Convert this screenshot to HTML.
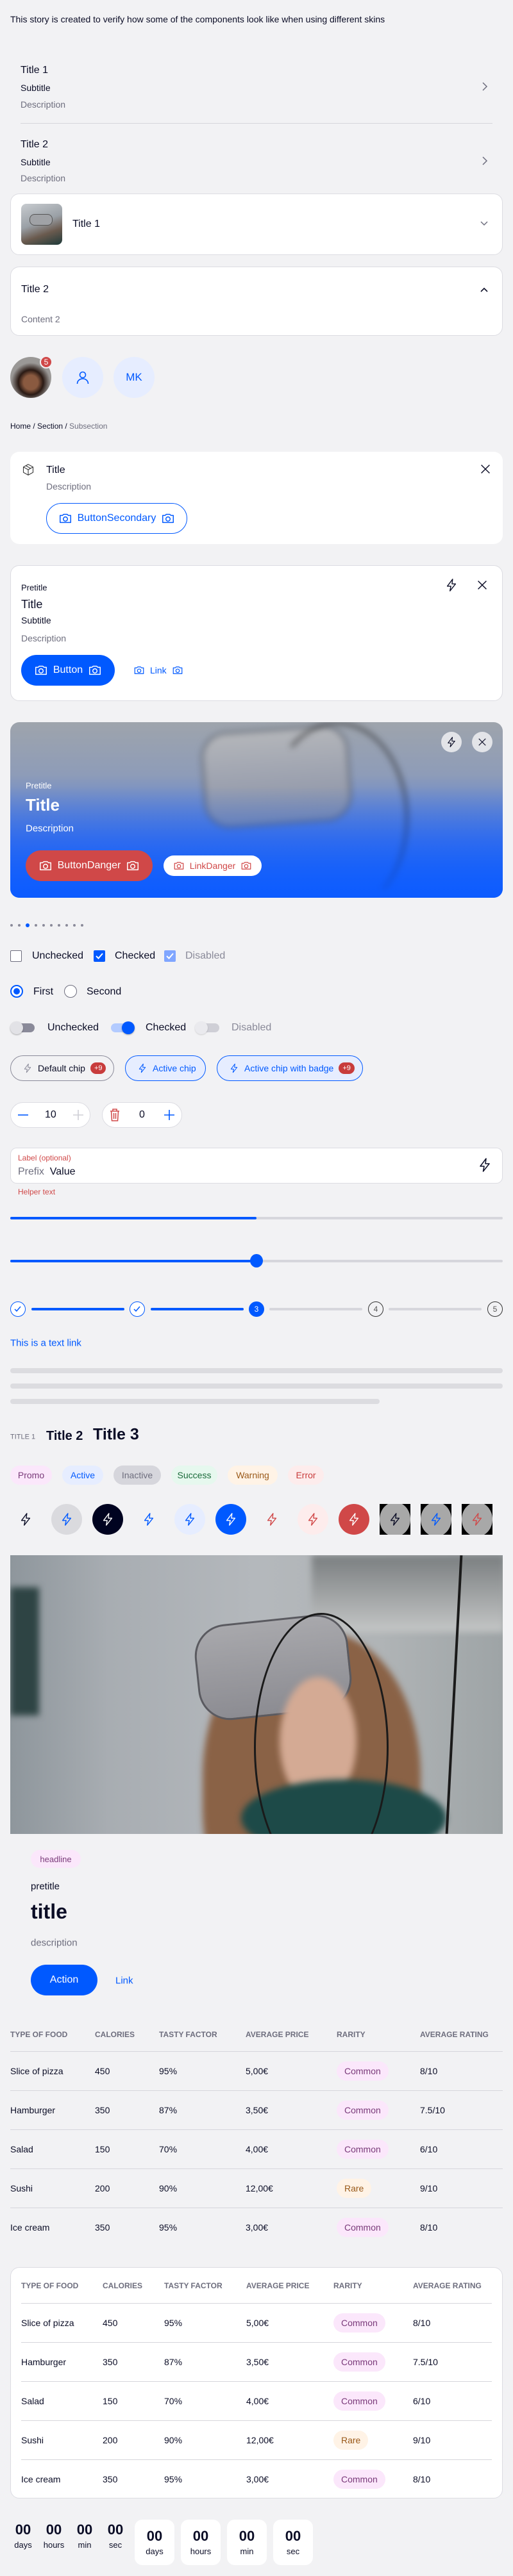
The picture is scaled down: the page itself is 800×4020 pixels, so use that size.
<!DOCTYPE html>
<html><head><meta charset="utf-8">
<style>
*{box-sizing:border-box;margin:0;padding:0}
body{width:800px;height:4020px;background:#f2f2f4;font-family:"Liberation Sans",sans-serif;color:#0b0d26;position:relative;overflow:hidden}
.a{position:absolute}
.t{position:absolute;white-space:nowrap;line-height:1;transform:translateY(-50%)}
.card{position:absolute;left:16px;width:768px;background:#fff;border:1px solid #dcdce2;border-radius:14px}
.g{color:#6e6e7e}
.b{color:#0059ff}
.tag{position:absolute;height:30px;border-radius:15px;font-size:14px;display:flex;align-items:center;justify-content:center}
.ib{position:absolute;width:48px;height:48px;border-radius:50%;display:flex;align-items:center;justify-content:center;top:2347px}
.th{font-size:12px;color:#6e6e7e;font-weight:bold}
.td{font-size:14px}
.cm{position:absolute;height:30px;padding:0 12px;border-radius:15px;background:#fbe7fb;color:#7a3a7a;font-size:14px;display:flex;align-items:center;transform:translateY(-50%)}
.rare{background:#fff3e6;color:#9a5a1a}
.bl{filter:blur(5px)}
</style></head><body>
<svg width="0" height="0" style="position:absolute"><defs>
<symbol id="cam" viewBox="0 0 24 24"><path d="M3 7h4l2-2h6l2 2h4v12H3z" fill="none" stroke="currentColor" stroke-width="1.6" stroke-linejoin="round"/><circle cx="12" cy="13" r="3.6" fill="none" stroke="currentColor" stroke-width="1.6"/></symbol>
<symbol id="bolt" viewBox="0 0 24 24"><path d="M14 2L5 14h6l-1.5 8L19 10h-6z" fill="none" stroke="currentColor" stroke-width="1.5" stroke-linejoin="round"/></symbol>
<symbol id="x" viewBox="0 0 24 24"><path d="M5 5l14 14M19 5L5 19" stroke="currentColor" stroke-width="1.6"/></symbol>
</defs></svg>

<div class="t" style="left:16px;top:30px;font-size:14px">This story is created to verify how some of the components look like when using different skins</div>

<div class="t" style="left:32px;top:110px;font-size:16px">Title 1</div>
<div class="t" style="left:32px;top:137px;font-size:14px">Subtitle</div>
<div class="t g" style="left:32px;top:163px;font-size:14px">Description</div>
<svg class="a" style="left:750px;top:127px" width="12" height="16"><path d="M3 2l6 6-6 6" fill="none" stroke="#6e6e7e" stroke-width="1.5"/></svg>
<div class="a" style="left:32px;top:192px;width:736px;height:1px;background:#d6d6dc"></div>
<div class="t" style="left:32px;top:226px;font-size:16px">Title 2</div>
<div class="t" style="left:32px;top:253px;font-size:14px">Subtitle</div>
<div class="t g" style="left:32px;top:278px;font-size:14px">Description</div>
<svg class="a" style="left:750px;top:243px" width="12" height="16"><path d="M3 2l6 6-6 6" fill="none" stroke="#6e6e7e" stroke-width="1.5"/></svg>

<div class="card" style="top:302px;height:96px"></div>
<div class="a" style="left:33px;top:318px;width:64px;height:64px;border-radius:8px;background:linear-gradient(160deg,#c8ccd0 0%,#9aa0a6 45%,#6a5a4e 70%,#1e3a3a 100%)"></div>
<div class="a" style="left:46px;top:334px;width:36px;height:18px;border-radius:8px;background:#a0a2a6;border:1px solid #555"></div>
<div class="t" style="left:113px;top:350px;font-size:16px">Title 1</div>
<svg class="a" style="left:748px;top:344px" width="14" height="10"><path d="M2 2l5 5 5-5" fill="none" stroke="#6e6e7e" stroke-width="1.5"/></svg>

<div class="card" style="top:416px;height:108px"></div>
<div class="t" style="left:33px;top:452px;font-size:16px">Title 2</div>
<div class="t g" style="left:33px;top:498px;font-size:14px">Content 2</div>
<svg class="a" style="left:748px;top:447px" width="14" height="10"><path d="M2 8l5-5 5 5" fill="none" stroke="#0b0d26" stroke-width="1.6"/></svg>

<div class="a" style="left:16px;top:557px;width:64px;height:64px;border-radius:50%;background:radial-gradient(circle at 50% 62%,#8a5a40 0 22%,#2a1a14 38%,#9a9896 60%)"></div>
<div class="a" style="left:62px;top:555px;width:20px;height:20px;border-radius:50%;background:#d04848;border:2px solid #f2f2f4;color:#fff;font-size:12px;display:flex;align-items:center;justify-content:center">5</div>
<div class="a" style="left:97px;top:557px;width:64px;height:64px;border-radius:50%;background:#e6edff;display:flex;align-items:center;justify-content:center"><svg width="24" height="24" viewBox="0 0 24 24"><circle cx="12" cy="8" r="4.5" fill="none" stroke="#0059ff" stroke-width="1.6"/><path d="M3.5 22c0-5 4-8 8.5-8s8.5 3 8.5 8" fill="none" stroke="#0059ff" stroke-width="1.6"/></svg></div>
<div class="a b" style="left:177px;top:557px;width:64px;height:64px;border-radius:50%;background:#e6edff;display:flex;align-items:center;justify-content:center;font-size:17px">MK</div>

<div class="t" style="left:16px;top:665px;font-size:12px">Home / Section / <span class="g">Subsection</span></div>

<div class="card" style="top:705px;height:144px;border:none"></div>
<svg class="a" style="left:34px;top:723px" width="20" height="20" viewBox="0 0 24 24"><path d="M12 2l9 5v10l-9 5-9-5V7zM3 7l9 5 9-5M12 12v10M7.5 4.5l9 5" fill="none" stroke="#333" stroke-width="1.3"/></svg>
<div class="t" style="left:72px;top:734px;font-size:16px">Title</div>
<div class="t g" style="left:72px;top:759px;font-size:14px">Description</div>
<div class="a b" style="left:72px;top:785px;width:220px;height:48px;border:1.5px solid #0059ff;border-radius:24px;display:flex;align-items:center;justify-content:center;gap:8px;font-size:16px"><svg width="22" height="22"><use href="#cam"/></svg>ButtonSecondary<svg width="22" height="22"><use href="#cam"/></svg></div>
<svg class="a" style="left:746px;top:721px;color:#0b0d26" width="22" height="22"><use href="#x"/></svg>

<div class="card" style="top:882px;height:212px"></div>
<div class="t" style="left:33px;top:917px;font-size:13px">Pretitle</div>
<div class="t" style="left:33px;top:943px;font-size:18px">Title</div>
<div class="t" style="left:33px;top:968px;font-size:14px">Subtitle</div>
<div class="t g" style="left:33px;top:996px;font-size:14px">Description</div>
<div class="a" style="left:33px;top:1022px;width:146px;height:48px;background:#0059ff;color:#fff;border-radius:24px;display:flex;align-items:center;justify-content:center;gap:8px;font-size:16px"><svg width="22" height="22"><use href="#cam"/></svg>Button<svg width="22" height="22"><use href="#cam"/></svg></div>
<div class="a b" style="left:208px;top:1034px;height:24px;display:flex;align-items:center;gap:8px;font-size:14px"><svg width="18" height="18"><use href="#cam"/></svg>Link<svg width="18" height="18"><use href="#cam"/></svg></div>
<svg class="a" style="left:693px;top:902px;color:#0b0d26" width="22" height="22"><use href="#bolt"/></svg>
<svg class="a" style="left:741px;top:902px;color:#0b0d26" width="22" height="22"><use href="#x"/></svg>

<div class="a" style="left:16px;top:1127px;width:768px;height:274px;border-radius:14px;overflow:hidden;background:linear-gradient(180deg,#9ea4ac 0%,#8e9cb8 30%,#4a78e0 65%,#0d5cff 100%)">
 <div class="a bl" style="left:300px;top:10px;width:230px;height:150px;border-radius:40px;background:linear-gradient(180deg,#b4b6ba,#8890a6);border:3px solid #555b66;transform:rotate(-4deg)"></div>
 <div class="a bl" style="left:400px;top:0;width:220px;height:300px;border-radius:50%;border:3px solid #222;border-left-color:transparent;border-bottom-color:transparent"></div>
 <div class="a" style="left:0;top:100px;width:768px;height:174px;background:linear-gradient(180deg,rgba(13,92,255,0),rgba(13,92,255,.85))"></div>
</div>
<div class="t" style="left:40px;top:1226px;font-size:13px;color:#fff">Pretitle</div>
<div class="t" style="left:40px;top:1256px;font-size:26px;font-weight:bold;color:#fff">Title</div>
<div class="t" style="left:40px;top:1293px;font-size:15px;color:#fff">Description</div>
<div class="a" style="left:40px;top:1327px;width:198px;height:48px;background:#d04848;color:#fff;border-radius:24px;display:flex;align-items:center;justify-content:center;gap:8px;font-size:16px"><svg width="22" height="22"><use href="#cam"/></svg>ButtonDanger<svg width="22" height="22"><use href="#cam"/></svg></div>
<div class="a" style="left:255px;top:1335px;width:153px;height:32px;background:#fff;color:#d04848;border-radius:16px;display:flex;align-items:center;justify-content:center;gap:8px;font-size:14px"><svg width="18" height="18"><use href="#cam"/></svg>LinkDanger<svg width="18" height="18"><use href="#cam"/></svg></div>
<div class="a" style="left:688px;top:1142px;width:32px;height:32px;border-radius:50%;background:rgba(240,240,242,.85);display:flex;align-items:center;justify-content:center;color:#0b0d26"><svg width="18" height="18"><use href="#bolt"/></svg></div>
<div class="a" style="left:736px;top:1142px;width:32px;height:32px;border-radius:50%;background:rgba(240,240,242,.85);display:flex;align-items:center;justify-content:center;color:#0b0d26"><svg width="18" height="18"><use href="#x"/></svg></div>

<div class="a" style="left:16px;top:1441px;display:flex;gap:8px;align-items:center">
<i style="width:4px;height:4px;border-radius:50%;background:#8a8a99"></i><i style="width:4px;height:4px;border-radius:50%;background:#8a8a99"></i><i style="width:6px;height:6px;border-radius:50%;background:#0059ff"></i><i style="width:4px;height:4px;border-radius:50%;background:#8a8a99"></i><i style="width:4px;height:4px;border-radius:50%;background:#8a8a99"></i><i style="width:4px;height:4px;border-radius:50%;background:#8a8a99"></i><i style="width:4px;height:4px;border-radius:50%;background:#8a8a99"></i><i style="width:4px;height:4px;border-radius:50%;background:#8a8a99"></i><i style="width:4px;height:4px;border-radius:50%;background:#8a8a99"></i><i style="width:4px;height:4px;border-radius:50%;background:#8a8a99"></i></div>

<div class="a" style="left:16px;top:1483px;width:18px;height:18px;border:1.5px solid #6e6e7e;border-radius:2px;background:#fff"></div>
<div class="t" style="left:50px;top:1492px;font-size:16px">Unchecked</div>
<div class="a" style="left:146px;top:1483px;width:18px;height:18px;border-radius:2px;background:#0059ff"><svg width="18" height="18"><path d="M4 9l3.5 3.5L14 5" fill="none" stroke="#fff" stroke-width="2"/></svg></div>
<div class="t" style="left:179px;top:1492px;font-size:16px">Checked</div>
<div class="a" style="left:256px;top:1483px;width:18px;height:18px;border-radius:2px;background:#80a6ff"><svg width="18" height="18"><path d="M4 9l3.5 3.5L14 5" fill="none" stroke="#fff" stroke-width="2"/></svg></div>
<div class="t" style="left:289px;top:1492px;font-size:16px;color:#8a8a99">Disabled</div>

<div class="a" style="left:16px;top:1537px;width:20px;height:20px;border:2px solid #0059ff;border-radius:50%;background:#fff"><div style="margin:3px;width:10px;height:10px;border-radius:50%;background:#0059ff"></div></div>
<div class="t" style="left:52px;top:1548px;font-size:16px">First</div>
<div class="a" style="left:100px;top:1537px;width:20px;height:20px;border:1.5px solid #6e6e7e;border-radius:50%;background:#fff"></div>
<div class="t" style="left:135px;top:1548px;font-size:16px">Second</div>

<div class="a" style="left:18px;top:1597px;width:36px;height:14px;border-radius:7px;background:#8a8a99"></div>
<div class="a" style="left:16px;top:1594px;width:20px;height:20px;border-radius:50%;background:#e2e2e6;box-shadow:0 1px 2px rgba(0,0,0,.3)"></div>
<div class="t" style="left:74px;top:1604px;font-size:16px">Unchecked</div>
<div class="a" style="left:173px;top:1597px;width:36px;height:14px;border-radius:7px;background:#b3cbff"></div>
<div class="a" style="left:190px;top:1594px;width:20px;height:20px;border-radius:50%;background:#0059ff;box-shadow:0 1px 2px rgba(0,0,0,.3)"></div>
<div class="t" style="left:227px;top:1604px;font-size:16px">Checked</div>
<div class="a" style="left:306px;top:1597px;width:36px;height:14px;border-radius:7px;background:#cfcfd6"></div>
<div class="a" style="left:304px;top:1594px;width:20px;height:20px;border-radius:50%;background:#eaeaee;box-shadow:0 1px 2px rgba(0,0,0,.15)"></div>
<div class="t" style="left:361px;top:1604px;font-size:16px;color:#8a8a99">Disabled</div>

<div class="a" style="left:16px;top:1647px;width:162px;height:40px;border:1px solid #8a8a99;border-radius:20px;display:flex;align-items:center;padding-left:18px;gap:8px;font-size:14px;color:#8a8a99"><svg width="16" height="16"><use href="#bolt"/></svg><span style="color:#0b0d26">Default chip</span><span style="background:#c83c3c;color:#fff;font-size:11px;border-radius:9px;padding:3px 6px">+9</span></div>
<div class="a b" style="left:195px;top:1647px;width:126px;height:40px;border:1px solid #0059ff;background:#e6edff;border-radius:20px;display:flex;align-items:center;padding-left:18px;gap:8px;font-size:14px"><svg width="16" height="16"><use href="#bolt"/></svg>Active chip</div>
<div class="a b" style="left:338px;top:1647px;width:228px;height:40px;border:1px solid #0059ff;background:#e6edff;border-radius:20px;display:flex;align-items:center;padding-left:18px;gap:8px;font-size:14px"><svg width="16" height="16"><use href="#bolt"/></svg>Active chip with badge<span style="background:#c83c3c;color:#fff;font-size:11px;border-radius:9px;padding:3px 6px">+9</span></div>

<div class="a" style="left:16px;top:1720px;width:125px;height:40px;border:1px solid #dcdce2;border-radius:20px;background:#fff"></div>
<svg class="a" style="left:26px;top:1730px" width="20" height="20"><path d="M2 10h16" stroke="#0059ff" stroke-width="1.6"/></svg>
<div class="t" style="left:70px;top:1740px;font-size:16px">10</div>
<svg class="a" style="left:112px;top:1730px" width="20" height="20"><path d="M2 10h16M10 2v16" stroke="#cfcfd6" stroke-width="1.6"/></svg>
<div class="a" style="left:159px;top:1720px;width:125px;height:40px;border:1px solid #dcdce2;border-radius:20px;background:#fff"></div>
<svg class="a" style="left:169px;top:1729px" width="20" height="22" viewBox="0 0 20 22"><path d="M3 5h14M7 5V2h6v3M4.5 5l1 15h9l1-15M8.5 8v9M11.5 8v9" fill="none" stroke="#d04848" stroke-width="1.5"/></svg>
<div class="t" style="left:217px;top:1740px;font-size:16px">0</div>
<svg class="a" style="left:254px;top:1730px" width="20" height="20"><path d="M2 10h16M10 2v16" stroke="#0059ff" stroke-width="1.6"/></svg>

<div class="a" style="left:16px;top:1791px;width:768px;height:56px;background:#fff;border:1px solid #dcdce2;border-radius:10px"></div>
<div class="t" style="left:28px;top:1807px;font-size:12px;color:#d04848">Label (optional)</div>
<div class="t" style="left:28px;top:1829px;font-size:16px"><span class="g">Prefix</span>&nbsp;&nbsp;Value</div>
<svg class="a" style="left:744px;top:1806px;color:#0b0d26" width="24" height="24"><use href="#bolt"/></svg>
<div class="t" style="left:28px;top:1860px;font-size:12px;color:#d04848">Helper text</div>

<div class="a" style="left:16px;top:1899px;width:768px;height:4px;border-radius:2px;background:#d6d6dc"></div>
<div class="a" style="left:16px;top:1899px;width:384px;height:4px;border-radius:2px;background:#0059ff"></div>

<div class="a" style="left:16px;top:1966px;width:768px;height:4px;border-radius:2px;background:#d6d6dc"></div>
<div class="a" style="left:16px;top:1966px;width:384px;height:4px;border-radius:2px;background:#0059ff"></div>
<div class="a" style="left:390px;top:1957px;width:20px;height:21px;border-radius:50%;background:#0059ff"></div>

<div class="a" style="left:49px;top:2041px;width:145px;height:4px;border-radius:2px;background:#0059ff"></div>
<div class="a" style="left:235px;top:2041px;width:145px;height:4px;border-radius:2px;background:#0059ff"></div>
<div class="a" style="left:420px;top:2041px;width:145px;height:4px;border-radius:2px;background:#d6d6dc"></div>
<div class="a" style="left:606px;top:2041px;width:145px;height:4px;border-radius:2px;background:#d6d6dc"></div>
<div class="a" style="left:16px;top:2031px;width:24px;height:24px;border:1.5px solid #0059ff;border-radius:50%;background:#fff"><svg width="21" height="21"><path d="M6 11l3 3 6-7" fill="none" stroke="#0059ff" stroke-width="1.5"/></svg></div>
<div class="a" style="left:202px;top:2031px;width:24px;height:24px;border:1.5px solid #0059ff;border-radius:50%;background:#fff"><svg width="21" height="21"><path d="M6 11l3 3 6-7" fill="none" stroke="#0059ff" stroke-width="1.5"/></svg></div>
<div class="a" style="left:388px;top:2031px;width:24px;height:24px;border-radius:50%;background:#0059ff;color:#fff;font-size:12px;display:flex;align-items:center;justify-content:center">3</div>
<div class="a" style="left:574px;top:2031px;width:24px;height:24px;border:1.5px solid #333;border-radius:50%;color:#555;font-size:12px;display:flex;align-items:center;justify-content:center">4</div>
<div class="a" style="left:760px;top:2031px;width:24px;height:24px;border:1.5px solid #333;border-radius:50%;color:#555;font-size:12px;display:flex;align-items:center;justify-content:center">5</div>

<div class="t b" style="left:16px;top:2096px;font-size:15px">This is a text link</div>

<div class="a" style="left:16px;top:2135px;width:768px;height:8px;border-radius:4px;background:#dcdce0"></div>
<div class="a" style="left:16px;top:2159px;width:768px;height:8px;border-radius:4px;background:#dcdce0"></div>
<div class="a" style="left:16px;top:2183px;width:576px;height:8px;border-radius:4px;background:#dcdce0"></div>

<div class="t g" style="left:16px;top:2243px;font-size:11px">TITLE 1</div>
<div class="t" style="left:72px;top:2241px;font-size:20px;font-weight:bold">Title 2</div>
<div class="t" style="left:145px;top:2239px;font-size:25px;font-weight:bold">Title 3</div>

<div class="tag" style="left:16px;top:2287px;width:65px;background:#fbe7fb;color:#7a3a7a">Promo</div>
<div class="tag" style="left:97px;top:2287px;width:64px;background:#e6edff;color:#0059ff">Active</div>
<div class="tag" style="left:177px;top:2287px;width:74px;background:#d6d6dc;color:#6e6e7e">Inactive</div>
<div class="tag" style="left:267px;top:2287px;width:72px;background:#e6f8ee;color:#1a6a3a">Success</div>
<div class="tag" style="left:355px;top:2287px;width:78px;background:#fff3e6;color:#9a5a1a">Warning</div>
<div class="tag" style="left:449px;top:2287px;width:56px;background:#fdecec;color:#c83c3c">Error</div>

<div class="ib" style="left:16px;color:#0b0d26"><svg width="22" height="22"><use href="#bolt"/></svg></div>
<div class="ib" style="left:80px;background:#dadade;color:#0059ff"><svg width="22" height="22"><use href="#bolt"/></svg></div>
<div class="ib" style="left:144px;background:#000320;color:#fff"><svg width="22" height="22"><use href="#bolt"/></svg></div>
<div class="ib" style="left:208px;color:#0059ff"><svg width="22" height="22"><use href="#bolt"/></svg></div>
<div class="ib" style="left:272px;background:#e6edff;color:#0059ff"><svg width="22" height="22"><use href="#bolt"/></svg></div>
<div class="ib" style="left:336px;background:#0059ff;color:#fff"><svg width="22" height="22"><use href="#bolt"/></svg></div>
<div class="ib" style="left:400px;color:#d04848"><svg width="22" height="22"><use href="#bolt"/></svg></div>
<div class="ib" style="left:464px;background:#fdecec;color:#d04848"><svg width="22" height="22"><use href="#bolt"/></svg></div>
<div class="ib" style="left:528px;background:#d04848;color:#fff"><svg width="22" height="22"><use href="#bolt"/></svg></div>
<div class="ib" style="left:592px;border-radius:0;background:#000;overflow:hidden"><div style="width:48px;height:54px;border-radius:50%;background:#a8a8a8;display:flex;align-items:center;justify-content:center;color:#0b0d26"><svg width="22" height="22"><use href="#bolt"/></svg></div></div>
<div class="ib" style="left:656px;border-radius:0;background:#000;overflow:hidden"><div style="width:48px;height:54px;border-radius:50%;background:#a8a8a8;display:flex;align-items:center;justify-content:center;color:#0059ff"><svg width="22" height="22"><use href="#bolt"/></svg></div></div>
<div class="ib" style="left:720px;border-radius:0;background:#000;overflow:hidden"><div style="width:48px;height:54px;border-radius:50%;background:#a8a8a8;display:flex;align-items:center;justify-content:center;color:#d04848"><svg width="22" height="22"><use href="#bolt"/></svg></div></div>

<div class="a" style="left:16px;top:2427px;width:768px;height:435px;overflow:hidden;background:linear-gradient(90deg,#8e969c 0%,#a8adb2 20%,#b4b8bc 50%,#b0b4b6 75%,#9ea4a6 100%)">
 <div class="a bl" style="left:0;top:50px;width:45px;height:200px;background:#2e4444"></div>
 <div class="a bl" style="left:470px;top:0;width:300px;height:120px;background:linear-gradient(180deg,#7a7e80,#c4c6c6)"></div>
 <div class="a bl" style="left:300px;top:120px;width:340px;height:500px;border-radius:45%;background:#8a6246"></div>
 <div class="a" style="left:290px;top:100px;width:240px;height:150px;border-radius:50px;background:linear-gradient(180deg,#a8a8ac,#8c8c92);border:3px solid #5a5a60;transform:rotate(-6deg)"></div>
 <div class="a bl" style="left:420px;top:190px;width:120px;height:200px;border-radius:50%;background:#d4aa94"></div>
 <div class="a bl" style="left:360px;top:350px;width:320px;height:120px;border-radius:50%;background:#1d4a48"></div>
 <div class="a" style="left:380px;top:90px;width:210px;height:420px;border-radius:50%;border:3px solid #1a1a1a;border-bottom-color:transparent"></div>
 <div class="a" style="left:690px;top:0;width:4px;height:435px;background:#1a1a1a;transform:rotate(3deg)"></div>
</div>

<div class="a" style="left:48px;top:2887px;width:78px;height:28px;border-radius:14px;background:#fbe7fb;color:#7a3a7a;font-size:13px;display:flex;align-items:center;justify-content:center">headline</div>
<div class="t" style="left:48px;top:2944px;font-size:15px">pretitle</div>
<div class="t" style="left:48px;top:2983px;font-size:32px;font-weight:bold">title</div>
<div class="t g" style="left:48px;top:3032px;font-size:15px">description</div>
<div class="a" style="left:48px;top:3066px;width:104px;height:48px;background:#0059ff;color:#fff;border-radius:24px;display:flex;align-items:center;justify-content:center;font-size:16px">Action</div>
<div class="t b" style="left:180px;top:3091px;font-size:15px">Link</div>

<div class="t th" style="left:16px;top:3175px">TYPE OF FOOD</div>
<div class="t th" style="left:148px;top:3175px">CALORIES</div>
<div class="t th" style="left:248px;top:3175px">TASTY FACTOR</div>
<div class="t th" style="left:383px;top:3175px">AVERAGE PRICE</div>
<div class="t th" style="left:525px;top:3175px">RARITY</div>
<div class="t th" style="left:655px;top:3175px">AVERAGE RATING</div>
<div class="a" style="left:16px;top:3201px;width:768px;height:1px;background:#d6d6dc"></div>
<div class="a" style="left:16px;top:3262px;width:768px;height:1px;background:#d6d6dc"></div>
<div class="a" style="left:16px;top:3323px;width:768px;height:1px;background:#d6d6dc"></div>
<div class="a" style="left:16px;top:3384px;width:768px;height:1px;background:#d6d6dc"></div>
<div class="a" style="left:16px;top:3445px;width:768px;height:1px;background:#d6d6dc"></div>

<div class="t td" style="left:16px;top:3232px">Slice of pizza</div><div class="t td" style="left:148px;top:3232px">450</div><div class="t td" style="left:248px;top:3232px">95%</div><div class="t td" style="left:383px;top:3232px">5,00€</div><div class="cm" style="left:525px;top:3232px">Common</div><div class="t td" style="left:655px;top:3232px">8/10</div>
<div class="t td" style="left:16px;top:3293px">Hamburger</div><div class="t td" style="left:148px;top:3293px">350</div><div class="t td" style="left:248px;top:3293px">87%</div><div class="t td" style="left:383px;top:3293px">3,50€</div><div class="cm" style="left:525px;top:3293px">Common</div><div class="t td" style="left:655px;top:3293px">7.5/10</div>
<div class="t td" style="left:16px;top:3354px">Salad</div><div class="t td" style="left:148px;top:3354px">150</div><div class="t td" style="left:248px;top:3354px">70%</div><div class="t td" style="left:383px;top:3354px">4,00€</div><div class="cm" style="left:525px;top:3354px">Common</div><div class="t td" style="left:655px;top:3354px">6/10</div>
<div class="t td" style="left:16px;top:3415px">Sushi</div><div class="t td" style="left:148px;top:3415px">200</div><div class="t td" style="left:248px;top:3415px">90%</div><div class="t td" style="left:383px;top:3415px">12,00€</div><div class="cm rare" style="left:525px;top:3415px">Rare</div><div class="t td" style="left:655px;top:3415px">9/10</div>
<div class="t td" style="left:16px;top:3476px">Ice cream</div><div class="t td" style="left:148px;top:3476px">350</div><div class="t td" style="left:248px;top:3476px">95%</div><div class="t td" style="left:383px;top:3476px">3,00€</div><div class="cm" style="left:525px;top:3476px">Common</div><div class="t td" style="left:655px;top:3476px">8/10</div>

<div class="card" style="top:3538px;height:361px"></div>
<div class="t th" style="left:33px;top:3567px">TYPE OF FOOD</div>
<div class="t th" style="left:160px;top:3567px">CALORIES</div>
<div class="t th" style="left:256px;top:3567px">TASTY FACTOR</div>
<div class="t th" style="left:384px;top:3567px">AVERAGE PRICE</div>
<div class="t th" style="left:520px;top:3567px">RARITY</div>
<div class="t th" style="left:644px;top:3567px">AVERAGE RATING</div>
<div class="a" style="left:33px;top:3594px;width:734px;height:1px;background:#d6d6dc"></div>
<div class="a" style="left:33px;top:3655px;width:734px;height:1px;background:#d6d6dc"></div>
<div class="a" style="left:33px;top:3716px;width:734px;height:1px;background:#d6d6dc"></div>
<div class="a" style="left:33px;top:3777px;width:734px;height:1px;background:#d6d6dc"></div>
<div class="a" style="left:33px;top:3838px;width:734px;height:1px;background:#d6d6dc"></div>

<div class="t td" style="left:33px;top:3625px">Slice of pizza</div><div class="t td" style="left:160px;top:3625px">450</div><div class="t td" style="left:256px;top:3625px">95%</div><div class="t td" style="left:384px;top:3625px">5,00€</div><div class="cm" style="left:520px;top:3625px">Common</div><div class="t td" style="left:644px;top:3625px">8/10</div>
<div class="t td" style="left:33px;top:3686px">Hamburger</div><div class="t td" style="left:160px;top:3686px">350</div><div class="t td" style="left:256px;top:3686px">87%</div><div class="t td" style="left:384px;top:3686px">3,50€</div><div class="cm" style="left:520px;top:3686px">Common</div><div class="t td" style="left:644px;top:3686px">7.5/10</div>
<div class="t td" style="left:33px;top:3747px">Salad</div><div class="t td" style="left:160px;top:3747px">150</div><div class="t td" style="left:256px;top:3747px">70%</div><div class="t td" style="left:384px;top:3747px">4,00€</div><div class="cm" style="left:520px;top:3747px">Common</div><div class="t td" style="left:644px;top:3747px">6/10</div>
<div class="t td" style="left:33px;top:3808px">Sushi</div><div class="t td" style="left:160px;top:3808px">200</div><div class="t td" style="left:256px;top:3808px">90%</div><div class="t td" style="left:384px;top:3808px">12,00€</div><div class="cm rare" style="left:520px;top:3808px">Rare</div><div class="t td" style="left:644px;top:3808px">9/10</div>
<div class="t td" style="left:33px;top:3869px">Ice cream</div><div class="t td" style="left:160px;top:3869px">350</div><div class="t td" style="left:256px;top:3869px">95%</div><div class="t td" style="left:384px;top:3869px">3,00€</div><div class="cm" style="left:520px;top:3869px">Common</div><div class="t td" style="left:644px;top:3869px">8/10</div>

<div class="a" style="left:16px;top:3934px;display:flex;gap:8px">
 <div style="width:40px;text-align:center"><div style="font-size:22px;font-weight:bold;line-height:28px">00</div><div style="font-size:13px;line-height:20px">days</div></div>
 <div style="width:40px;text-align:center"><div style="font-size:22px;font-weight:bold;line-height:28px">00</div><div style="font-size:13px;line-height:20px">hours</div></div>
 <div style="width:40px;text-align:center"><div style="font-size:22px;font-weight:bold;line-height:28px">00</div><div style="font-size:13px;line-height:20px">min</div></div>
 <div style="width:40px;text-align:center"><div style="font-size:22px;font-weight:bold;line-height:28px">00</div><div style="font-size:13px;line-height:20px">sec</div></div>
</div>
<div class="a" style="left:210px;top:3932px;display:flex;gap:10px">
 <div style="width:62px;height:71px;background:#fff;border-radius:12px;text-align:center;padding-top:12px"><div style="font-size:22px;font-weight:bold;line-height:28px">00</div><div style="font-size:13px;line-height:20px">days</div></div>
 <div style="width:62px;height:71px;background:#fff;border-radius:12px;text-align:center;padding-top:12px"><div style="font-size:22px;font-weight:bold;line-height:28px">00</div><div style="font-size:13px;line-height:20px">hours</div></div>
 <div style="width:62px;height:71px;background:#fff;border-radius:12px;text-align:center;padding-top:12px"><div style="font-size:22px;font-weight:bold;line-height:28px">00</div><div style="font-size:13px;line-height:20px">min</div></div>
 <div style="width:62px;height:71px;background:#fff;border-radius:12px;text-align:center;padding-top:12px"><div style="font-size:22px;font-weight:bold;line-height:28px">00</div><div style="font-size:13px;line-height:20px">sec</div></div>
</div>
</body></html>
